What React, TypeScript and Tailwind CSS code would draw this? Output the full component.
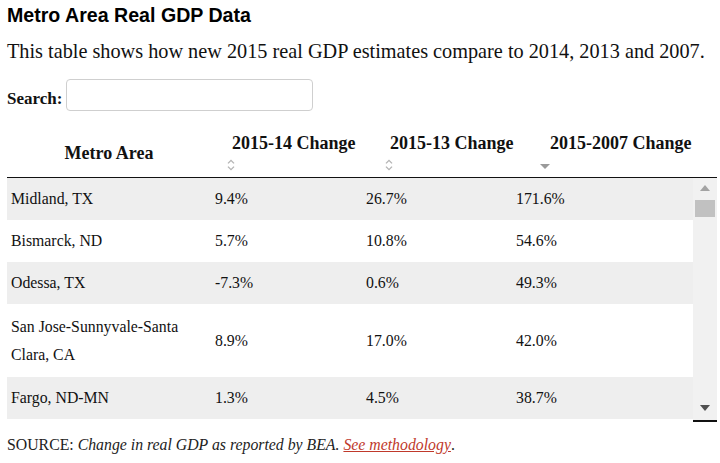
const rows = [
  { area: 'Midland, TX', a: '9.4%', b: '26.7%', c: '171.6%' },
  { area: 'Bismarck, ND', a: '5.7%', b: '10.8%', c: '54.6%' },
  { area: 'Odessa, TX', a: '-7.3%', b: '0.6%', c: '49.3%' },
  { area: 'San Jose-Sunnyvale-Santa Clara, CA', a: '8.9%', b: '17.0%', c: '42.0%' },
  { area: 'Fargo, ND-MN', a: '1.3%', b: '4.5%', c: '38.7%' },
]

const SortBoth = () => (
  <svg width="8" height="12" viewBox="0 0 8 12" className="block">
    <path d="M4 0.5 L7.5 4 L6.5 4.8 L4 2.3 L1.5 4.8 L0.5 4 Z" fill="#b5b5b5" />
    <path d="M4 11.5 L7.5 8 L6.5 7.2 L4 9.7 L1.5 7.2 L0.5 8 Z" fill="#b5b5b5" />
  </svg>
)

const SortDesc = () => (
  <svg width="10" height="5" viewBox="0 0 10 5" className="block">
    <path d="M0 0 L10 0 L5 5 Z" fill="#9a9a9a" />
  </svg>
)

const serif = "font-['Liberation_Serif',Georgia,serif]"

export default function App() {
  return (
    <div className={`w-[720px] h-[463px] bg-white text-[#111] overflow-hidden ${serif}`}>
      <h1 className="pl-[7px] pt-[3px] font-['Liberation_Sans',Arial,sans-serif] text-[19.6px] font-bold leading-[24px] text-black">
        Metro Area Real GDP Data
      </h1>
      <p className="pl-[7px] mt-[11px] text-[20.25px] leading-[26px] text-[#111]">
        This table shows how new 2015 real GDP estimates compare to 2014, 2013 and 2007.
      </p>
      <div className="flex items-center pl-[7px] mt-[15px] h-[32px]">
        <label className="text-[17px] font-bold mr-[4px] mt-[8px]">Search:</label>
        <input className="w-[247px] h-[32px] rounded-[4px] border border-[#cfcfcf] bg-white outline-none" />
      </div>
      <div className="mx-[7px] mt-[20px] w-[710px]">
        <div className="grid grid-cols-[204px_151px_149px_206px] h-[47px] border-b border-[#111] font-bold text-[18px] whitespace-nowrap">
          <div className="flex items-center justify-center pb-[1px]">Metro Area</div>
          <div className="flex flex-col pl-[21px]">
            <span className="leading-[24px]">2015-14 Change</span>
            <span className="mt-[4px] ml-[-5px]"><SortBoth /></span>
          </div>
          <div className="flex flex-col pl-[28px]">
            <span className="leading-[24px]">2015-13 Change</span>
            <span className="mt-[4px] ml-[-5px]"><SortBoth /></span>
          </div>
          <div className="flex flex-col pl-[39px]">
            <span className="leading-[24px]">2015-2007 Change</span>
            <span className="mt-[9px] ml-[-10px]"><SortDesc /></span>
          </div>
        </div>
        <div className="flex h-[244px]">
          <div className="flex-1 h-[242px] text-[15.8px] bg-white">
            {rows.map((r, i) => (
              <div
                key={r.area}
                className={`grid grid-cols-[204px_151px_149px_1fr] items-center ${i % 2 === 0 ? 'bg-[#eeeeee]' : 'bg-white'} ${r.area.startsWith('San') ? 'h-[73px]' : 'h-[42px]'}`}
              >
                <div className="pl-[4px] pr-[14px] leading-[28px]">{r.area}</div>
                <div className="pl-[4px]">{r.a}</div>
                <div className="pl-[4px]">{r.b}</div>
                <div className="pl-[5px]">{r.c}</div>
              </div>
            ))}
          </div>
          <div className="w-[24px] bg-[#f1f1f1] border-b-2 border-[#111] flex flex-col items-center">
            <svg width="10" height="6" viewBox="0 0 10 6" className="mt-[7px]">
              <path d="M5 0 L10 6 L0 6 Z" fill="#a3a3a3" />
            </svg>
            <div className="mt-[9px] w-[20px] h-[17px] bg-[#c1c1c1]" />
            <div className="flex-1" />
            <svg width="10" height="6" viewBox="0 0 10 6" className="mb-[9px]">
              <path d="M0 0 L10 0 L5 6 Z" fill="#505050" />
            </svg>
          </div>
        </div>
      </div>
      <p className="pl-[7px] mt-[11px] text-[15.8px] text-[#222]">
        SOURCE: <em>Change in real GDP as reported by BEA.</em>{' '}
        <a href="#" className="italic text-[#c0392b] underline">See methodology</a>.
      </p>
    </div>
  )
}
